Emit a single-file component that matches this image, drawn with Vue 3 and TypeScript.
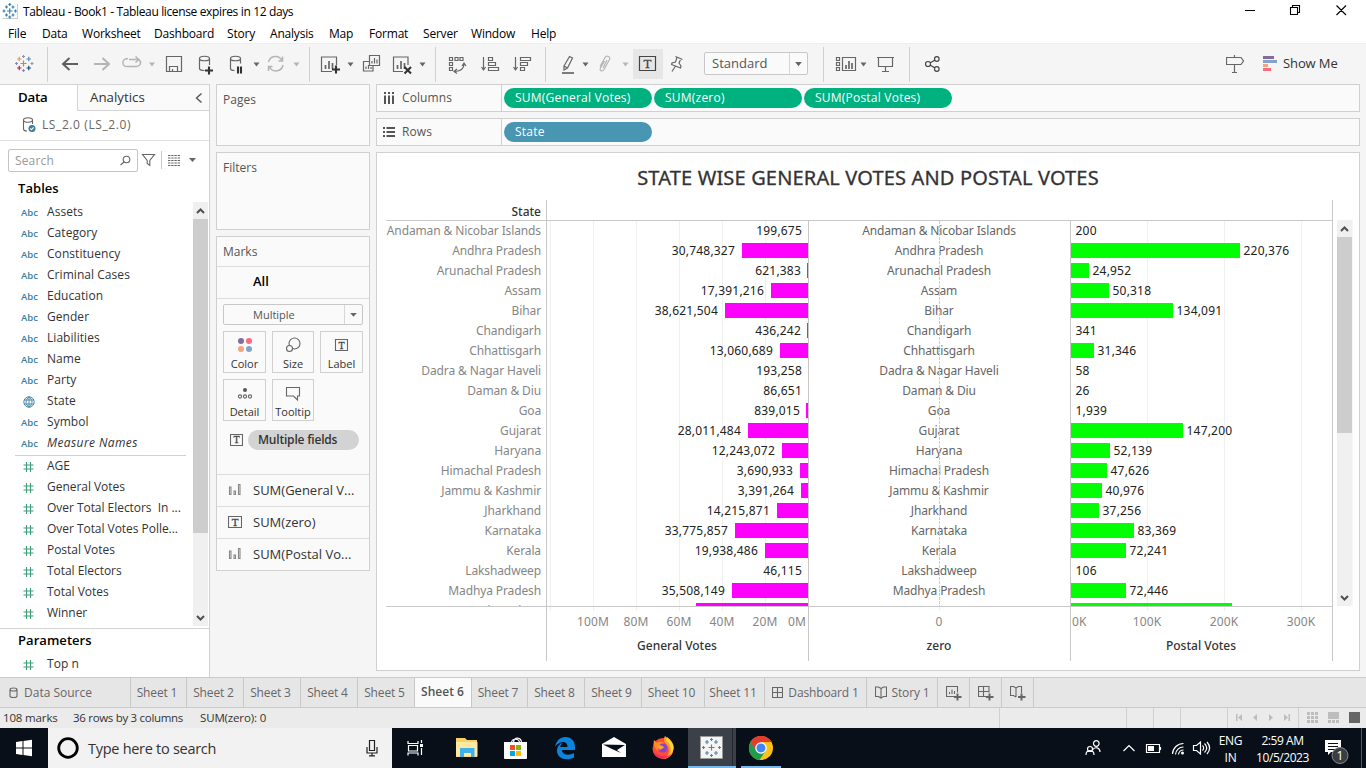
<script setup lang="ts">
interface Shape { d: string; c?: string }
interface Slot { x: number; w: number; shapes: Shape[]; letter?: { x: number; y: number; s: number } }

const caret = (x: number, c = 'cd'): Shape => ({ d: `M${x - 3} 62.500h6l-3 4z`, c })
const bars = (x: number, y: number): Shape => ({ d: `M${x} ${y}v-4M${x + 3.5} ${y}v-8M${x + 7} ${y}v-6`, c: 'thick' })

const toolsLeft: Slot[] = [
  { x: 0, w: 47, shapes: [
    { d: 'M20.5 63.5h6M23.5 60.5v6', c: 'o' },
    { d: 'M17 59h4.500M19.250 56.750v4.500', c: 'o2' },
    { d: 'M26.500 68h4.500M28.750 65.750v4.500', c: 'navy' },
    { d: 'M17 68h4.500M19.250 65.750v4.500', c: 'r' },
    { d: 'M26.500 59h4.500M28.750 56.750v4.500', c: 'bl' },
    { d: 'M22 56.500h3M23.500 55v3M30.500 63.500h3M32 62v3', c: 'bl2' },
    { d: 'M15 63.500h3M16.500 62v3M22 70.500h3M23.500 69v3', c: 'tl' },
  ] },
  { x: 47, w: 41, shapes: [{ d: 'M47.5 47v35', c: 'sep' }, { d: 'M63.5 64H78M69.500 58l-6.500 6 6.500 6', c: 'bold' }] },
  { x: 88, w: 28, shapes: [{ d: 'M94 64h14.500M102.500 58l6.500 6-6.500 6', c: 'boldlt' }] },
  { x: 116, w: 46, shapes: [{ d: 'M128 58.800h-1.200a3.900 3.900 0 0 0 0 7.800h10a3.900 3.900 0 0 0 2.500-6.700M129 59.500h9.500M135.500 56.500l3.300 3-3.300 3', c: 'lt2' }, caret(152, 'cl')] },
  { x: 162, w: 28, shapes: [{ d: 'M166.500 56.500h15v15h-15zM169.500 71v-4.500h8v4.500M172.500 71v-2' }] },
  { x: 190, w: 32, shapes: [{ d: 'M199.500 58.500v10c0 1.500 2 2 5 2M209.500 58.500v6.500M199.500 58.500c0-3 10-3 10 0s-10 3-10 0' }, { d: 'M205 70.500h8M209 66.500v8', c: 'blk' }] },
  { x: 222, w: 41, shapes: [{ d: 'M230.500 58.500v10c0 1.500 1.500 2 4 2M240.500 58.500v5M230.500 58.500c0-3 10-3 10 0s-10 3-10 0' }, { d: 'M238 66.500v7M241 66.500v7', c: 'blk' }, caret(256.5)] },
  { x: 263, w: 46, shapes: [{ d: 'M268.500 62a7.200 7.200 0 0 1 13.500-1.500M283 65a7.200 7.200 0 0 1-13.500 2M282.500 56.500v4.500h-4M268.500 71v-4.500h4', c: 'lt2' }, caret(296.5, 'cl')] },
  { x: 309, w: 51, shapes: [{ d: 'M309.5 47v35', c: 'sep' }, { d: 'M332 71.500h-10.500v-14.500h15v8' }, bars(325.5, 69), { d: 'M332 69.500h8M336 65.500v8', c: 'blk' }, caret(350.500)] },
  { x: 360, w: 30, shapes: [{ d: 'M369.500 55.500h10v10h-10zM369 61.500h-5.500v9.500h9.500V66' }, { d: 'M372 63.500v-2.500M374.500 63.500v-5.500M377 63.500v-4M366 69v-2.500M368.500 69v-4M371 69v-2' }] },
  { x: 390, w: 45, shapes: [{ d: 'M403 71.500h-9.500v-14.500h14.500v8' }, bars(397.5, 69), { d: 'M404.500 67l6.500 6.500M411 67l-6.500 6.500', c: 'blk' }, caret(422.500)] },
  { x: 435, w: 38, shapes: [{ d: 'M435.5 47v35', c: 'sep' }, { d: 'M449.500 57.500h3v3h-3zM455 57.500h3v3h-3zM460 57.500h3v3h-3zM449.500 62.500h3v3h-3zM449.500 67.500h3v3h-3zM464 64c0 4-3 7-9 7.500M462 66l2-3 2 3M457 69l-3 2.500 3 2' }] },
  { x: 473, w: 32, shapes: [{ d: 'M483.500 57v12M481.500 67l2 3 2-3M488.500 57.500h4v3h-4zM488.500 62.500h7v3h-7zM488.500 67.500h10v3h-10z' }] },
  { x: 505, w: 40, shapes: [{ d: 'M515.500 57v12M513.500 67l2 3 2-3M520.500 57.500h10v3h-10zM520.500 62.500h7v3h-7zM520.500 67.500h4v3h-4z' }] },
  { x: 545, w: 48, shapes: [{ d: 'M545.5 47v35', c: 'sep' }, { d: 'M564 66l5.500-9.500 3 1.500-5 10-3.500 2zM564 66l3.500 2' }, { d: 'M562 73h12', c: 'thick' }, caret(585.5)] },
  { x: 593, w: 40, shapes: [{ d: 'M604.500 61l-4 7c-1.500 3 2 4 3.500 1.500l5.500-10c1.500-3-3-4.500-4.500-2l-5 9M607 60l-4 8', c: 'lt' }, caret(625.500, 'cl')] },
  { x: 633, w: 30, shapes: [{ d: 'M633 49h30v30h-30z', c: 'hot' }, { d: 'M639.500 56.500h16v14h-16z', c: 'dk' }], letter: { x: 647.5, y: 68, s: 13 } },
  { x: 663, w: 41, shapes: [{ d: 'M675.500 56.500l7 3M677 57.500l-1.500 4.500-3.500 1-.5 1.500 9 3.500.5-2-2-3 2-4.500M675.500 66l-3.500 5.500' }] },
]
const toolsRight: Slot[] = [
  { x: 808, w: 64, shapes: [{ d: 'M823.5 47v35', c: 'sep' }, { d: 'M836.500 57.500h3v3h-3zM836.500 62.500h3v3h-3zM836.500 67.500h3v3h-3zM842.500 57.500h13v13h-13z' }, { d: 'M846 69v-4M849 69v-8M852 69v-6', c: 'thick' }, caret(863.500)] },
  { x: 872, w: 37, shapes: [{ d: 'M877 57.500h17M878.500 57.500v9h14v-9M885.500 66.500v5M882 71.500h7' }] },
  { x: 909, w: 317, shapes: [{ d: 'M909.5 47v35', c: 'sep' }, { d: 'M930 63l5-3M930 65l5 3M925.500 64a2.500 2.500 0 1 0 5 0 2.500 2.500 0 1 0-5 0M934.500 59a2.300 2.300 0 1 0 4.600 0 2.300 2.300 0 1 0-4.600 0M934.500 69a2.300 2.300 0 1 0 4.600 0 2.300 2.300 0 1 0-4.600 0', c: 'dk' }] },
  { x: 1226, w: 37, shapes: [{ d: 'M1226.500 57.500h14.500l2.500 3.500-2.500 3.500h-14.500zM1234.500 55v2M1234.500 65v7.500M1232 72.500h5' }] },
  { x: 1263, w: 20, shapes: [{ d: 'M1263 56h11v3h-11z', c: 'f1' }, { d: 'M1263 60h14v3h-14z', c: 'f2' }, { d: 'M1263 64h5v3h-5z', c: 'f3' }, { d: 'M1263 68h8v3h-8z', c: 'f4' }] },
]

const menus = ['File', 'Data', 'Worksheet', 'Dashboard', 'Story', 'Analysis', 'Map', 'Format', 'Server', 'Window', 'Help']
const menuX = [8, 42, 82, 154, 227, 270, 329, 369, 423, 471, 531, 600]

const dims = ['Assets', 'Category', 'Constituency', 'Criminal Cases', 'Education', 'Gender', 'Liabilities', 'Name', 'Party', 'State', 'Symbol', 'Measure Names']
const measures = ['AGE', 'General Votes', 'Over Total Electors  In ...', 'Over Total Votes Polle...', 'Postal Votes', 'Total Electors', 'Total Votes', 'Winner']
const hash = 'M3.500 0v10M7.500 0v10M.5 3h10M.5 7h10'

const rows: [string, number, number][] = [
  ['Andaman & Nicobar Islands', 199675, 200], ['Andhra Pradesh', 30748327, 220376], ['Arunachal Pradesh', 621383, 24952],
  ['Assam', 17391216, 50318], ['Bihar', 38621504, 134091], ['Chandigarh', 436242, 341], ['Chhattisgarh', 13060689, 31346],
  ['Dadra & Nagar Haveli', 193258, 58], ['Daman & Diu', 86651, 26], ['Goa', 839015, 1939], ['Gujarat', 28011484, 147200],
  ['Haryana', 12243072, 52139], ['Himachal Pradesh', 3690933, 47626], ['Jammu & Kashmir', 3391264, 40976],
  ['Jharkhand', 14215871, 37256], ['Karnataka', 33775857, 83369], ['Kerala', 19938486, 72241], ['Lakshadweep', 46115, 106],
  ['Madhya Pradesh', 35508149, 72446], ['Maharashtra', 52100000, 210000],
]
const gw = (v: number) => (v < 300000 ? 0 : Math.max(1, Math.round(v * 2.15e-6)))
const pw = (v: number) => (v < 1000 ? 0 : Math.round(v * 0.00077))
const fmt = (v: number) => v.toLocaleString('en-US')
const genTicks: [number, string][] = [[593, '100M'], [636, '80M'], [679, '60M'], [722, '40M'], [765, '20M']]
const postTicks: [number, string][] = [[1147, '100K'], [1224, '200K'], [1301, '300K']]

const sheets = [
  { n: 'Sheet 1', w: 56 }, { n: 'Sheet 2', w: 57 }, { n: 'Sheet 3', w: 57 }, { n: 'Sheet 4', w: 57 }, { n: 'Sheet 5', w: 57 },
  { n: 'Sheet 6', w: 57 }, { n: 'Sheet 7', w: 56 }, { n: 'Sheet 8', w: 57 }, { n: 'Sheet 9', w: 57 }, { n: 'Sheet 10', w: 63 }, { n: 'Sheet 11', w: 60 },
]
</script>

<template>
  <div class="win">
    <header class="title">
      <svg width="23" height="22" viewBox="0 0 23 22" class="ln"><path class="edge" d="M2.500 18.500h15V4" /><path class="bl" d="M7 11h5.500M9.750 8.250v5.500M5 7h3M6.500 5.500v3M11.500 7h3M13 5.500v3M5 15h3M6.500 13.500v3M11.500 15h3M13 13.500v3M8.250 4.500h3M9.750 3v3M8.250 17h3M9.750 15.500v3M2.500 11h3M4 9.500v3M14 11h3M15.500 9.500v3" /></svg>
      <span class="cap">Tableau - Book1 - Tableau license expires in 12 days</span>
      <svg class="ctl" width="130" height="22" viewBox="1236 0 130 22"><path d="M1245 10.500h10M1290.500 7.500h7v7h-7zM1292.500 7v-1.500h7v7H1298M1336.500 5.500l9.500 9.500M1346 5.500l-9.500 9.500" /></svg>
    </header>
    <nav class="menu"><span v-for="(m, i) in menus" :key="m" :style="{ width: menuX[i + 1] - menuX[i] + 'px' }">{{ m }}</span></nav>
    <div class="tools">
      <svg v-for="s in toolsLeft" :key="s.x" class="ic" :width="s.w" height="41" :viewBox="`${s.x} 43 ${s.w} 41`">
        <path v-for="(p, i) in s.shapes" :key="i" :d="p.d" :class="p.c" />
        <text v-if="s.letter" class="serif" :x="s.letter.x" :y="s.letter.y" :font-size="s.letter.s">T</text>
      </svg>
      <div class="sel std"><span>Standard</span><svg width="18" height="21" viewBox="0 0 18 21"><path d="M5.500 9h7l-3.500 4.500z" /></svg></div>
      <svg v-for="s in toolsRight" :key="s.x" class="ic" :width="s.w" height="41" :viewBox="`${s.x} 43 ${s.w} 41`">
        <path v-for="(p, i) in s.shapes" :key="i" :d="p.d" :class="p.c" />
      </svg>
      <span class="showme">Show Me</span>
    </div>

    <main class="work">
      <aside class="data">
        <div class="dtabs"><b>Data</b><div><span>Analytics</span><svg width="8" height="12" viewBox="0 0 8 12"><path d="M6.500 1.500L1.500 6l5 4.500" /></svg></div></div>
        <div class="src"><svg class="ln" width="15" height="16" viewBox="0 0 15 16"><path class="g" d="M1.500 3v9c0 1.500 1.500 2 3.500 2M10.500 3v4M1.500 3c0-3 9-3 9 0s-9 3-9 0" /><circle cx="10" cy="11.500" r="3.500" class="dot" /><path class="w" d="M8.300 11.500l1.200 1.200 2.200-2.400" /></svg>LS_2.0 (LS_2.0)</div>
        <div class="find">
          <div class="box"><span>Search</span><svg class="ln" width="11" height="11" viewBox="0 0 11 11"><circle cx="6.500" cy="4.500" r="3.300" class="g" /><path class="g" d="M4 7L.5 10" /></svg></div>
          <svg class="ln" width="68" height="22" viewBox="138 149 68 22"><path class="g" d="M142.500 154.500h12l-4.700 6v5l-2.600-2v-3z" /><path class="edge" d="M161.500 151v18" /><path class="g dash" d="M168 155.500h12M168 158h12M168 160.500h12M168 163h12M168 165.500h12" /><path class="cf" d="M189 158h7l-3.500 4z" /></svg>
        </div>
        <h3>Tables</h3>
        <div class="listwrap">
          <div class="list">
            <div v-for="d in dims" :key="d" class="it" :class="{ em: d === 'Measure Names' }">
              <i v-if="d !== 'State'">Abc</i>
              <i v-else><svg class="ln" width="12" height="12" viewBox="0 0 12 12"><path class="globe" d="M.8 6a5.200 5.200 0 1 0 10.400 0A5.200 5.200 0 1 0 .8 6M6 .8v10.400M1 4h10M1 8h10M6 .8c-4 3-4 7.500 0 10.400M6 .8c4 3 4 7.500 0 10.400" /></svg></i>
              <span>{{ d }}</span>
            </div>
            <hr />
            <div v-for="d in measures" :key="d" class="it"><i><svg class="ln" width="11" height="10" viewBox="0 0 11 10"><path class="hash" :d="hash" /></svg></i><span>{{ d }}</span></div>
          </div>
          <div class="sb"><svg width="15" height="17" viewBox="0 0 15 17"><path d="M4 11l3.500-3.500L11 11" /></svg><div class="th1"></div><svg width="15" height="17" viewBox="0 0 15 17"><path d="M4 7l3.500 3.500L11 7" /></svg></div>
        </div>
        <div class="params"><h3>Parameters</h3>
          <div class="it"><i><svg class="ln" width="11" height="10" viewBox="0 0 11 10"><path class="hash" :d="hash" /></svg></i><span>Top n</span></div>
        </div>
      </aside>

      <section class="cards">
        <div class="card pages">Pages</div>
        <div class="card filters">Filters</div>
        <div class="card marks">
          <div class="mh">Marks</div>
          <div class="all">All</div>
          <div class="sel mult"><span>Multiple</span><svg width="18" height="19" viewBox="0 0 18 19"><path d="M5.500 8h7l-3.500 4z" /></svg></div>
          <div class="btns">
            <div><svg width="20" height="16" viewBox="0 0 20 16"><circle cx="6" cy="4" r="3" fill="#856b98" /><circle cx="14" cy="4" r="3" fill="#fb6b7c" /><circle cx="6" cy="12" r="3" fill="#f5a47b" /><circle cx="14" cy="12" r="3" fill="#83a3cd" /></svg>Color</div>
            <div><svg class="ln" width="20" height="16" viewBox="0 0 20 16"><circle class="g" cx="11.500" cy="6.500" r="5.500" /><circle class="g card-bg" cx="6.500" cy="11.500" r="3" /></svg>Size</div>
            <div><svg class="ln" width="20" height="16" viewBox="0 0 20 16"><path class="g" d="M3.500 2.500h12v11h-12z" /><text class="serif" x="9.500" y="11.500" font-size="10">T</text></svg>Label</div>
            <div><svg class="ln" width="20" height="16" viewBox="0 0 20 16"><circle cx="10" cy="5" r="2" class="fd" /><circle class="g" cx="5" cy="11.500" r="1.600" /><circle class="g" cx="10" cy="11.500" r="1.600" /><circle class="g" cx="15" cy="11.500" r="1.600" /></svg>Detail</div>
            <div><svg class="ln" width="20" height="16" viewBox="0 0 20 16"><path class="g" d="M3.500 2.500h13v8.500h-2v4l-4-4h-7z" /></svg>Tooltip</div>
          </div>
          <div class="mf"><svg class="ln" width="13" height="12" viewBox="0 0 13 12"><path class="g" d="M.5.500h12v11h-12z" /><text class="serif" x="6.500" y="9.300" font-size="10">T</text></svg><span>Multiple fields</span></div>
          <div class="mrow"><svg class="ln" width="14" height="14" viewBox="0 0 14 14"><path class="mb" d="M1.500 4v7.500h1.500V4zM6 8v3.500h1.500V8zM10.500 1.500v10h1.500v-10z" /></svg>SUM(General V...</div>
          <div class="mrow"><svg class="ln" width="14" height="14" viewBox="0 0 14 14"><path class="g" d="M.5 1.500h13v11h-13z" /><text class="serif" x="7" y="10.500" font-size="11">T</text></svg>SUM(zero)</div>
          <div class="mrow"><svg class="ln" width="14" height="14" viewBox="0 0 14 14"><path class="mb" d="M1.500 4v7.500h1.500V4zM6 8v3.500h1.500V8zM10.500 1.500v10h1.500v-10z" /></svg>SUM(Postal Vo...</div>
        </div>
      </section>

      <section class="view">
        <div class="shelf"><div class="sl"><svg width="12" height="12" viewBox="0 0 12 12"><path d="M1 0h2v2H1zM1 3.500h2V12H1zM5 0h2v2H5zM5 3.500h2V12H5zM9 0h2v2H9zM9 3.500h2V12H9z" /></svg>Columns</div><span class="pill">SUM(General Votes)</span><span class="pill">SUM(zero)</span><span class="pill">SUM(Postal Votes)</span></div>
        <div class="shelf"><div class="sl"><svg width="12" height="12" viewBox="0 0 12 12"><path d="M0 1h2v2H0zM3.500 1H12v2H3.500zM0 5h2v2H0zM3.500 5H12v2H3.500zM0 9h2v2H0zM3.500 9H12v2H3.500z" /></svg>Rows</div><span class="pill blue">State</span></div>
        <div class="sheet">
          <svg class="chart" width="982" height="517" viewBox="377 153 982 517">
            <defs><clipPath id="body"><rect x="377" y="220" width="960" height="386" /></clipPath></defs>
            <text class="h" x="868" y="185" text-anchor="middle">STATE WISE GENERAL VOTES AND POSTAL VOTES</text>
            <path class="grid" d="M550.500 221v390M593.500 221v390M636.500 221v390M679.500 221v390M722.500 221v390M765.500 221v390M1147.500 221v390M1224.500 221v390M1301.500 221v390M939.500 607v4" />
            <g clip-path="url(#body)">
              <g v-for="(r, i) in rows" :key="r[0]">
                <text class="st" x="541" :y="235 + i * 20" text-anchor="end">{{ r[0] }}</text>
                <rect :x="808 - gw(r[1])" :y="223 + i * 20" :width="gw(r[1])" height="15" fill="#ff00ff" />
                <text v-if="i < 19" class="val" :x="gw(r[1]) ? 807 - gw(r[1]) - (gw(r[1]) > 5 ? 6 : 5) : 802" :y="235 + i * 20" text-anchor="end">{{ fmt(r[1]) }}</text>
                <text v-if="i < 19" class="mid" x="939" :y="235 + i * 20" text-anchor="middle">{{ r[0] }}</text>
                <rect x="1070" :y="223 + i * 20" :width="r[2] > 2000 ? pw(r[2]) : 0" height="15" fill="#00ff00" />
                <text v-if="i < 19" class="val" :x="Math.max(1075.5, 1073.500 + pw(r[2]))" :y="235 + i * 20">{{ fmt(r[2]) }}</text>
              </g>
            </g>
            <path class="zero" d="M939.500 221v385" />
            <path class="rule" d="M386 220.500h947M386 606.500h947M546.500 200v461M808.500 221v440M1070.500 221v440M1332.500 200v461" />
            <text class="hd" x="541" y="216" text-anchor="end">State</text>
            <text v-for="t in genTicks" :key="t[0]" class="tick" :x="t[0]" y="626" text-anchor="middle">{{ t[1] }}</text>
            <text class="tick" x="806" y="626" text-anchor="end">0M</text>
            <text class="tick" x="939" y="626" text-anchor="middle">0</text>
            <text class="tick" x="1072" y="626">0K</text>
            <text v-for="t in postTicks" :key="t[0]" class="tick" :x="t[0]" y="626" text-anchor="middle">{{ t[1] }}</text>
            <text class="hd" x="677" y="650" text-anchor="middle">General Votes</text>
            <text class="hd" x="939" y="650" text-anchor="middle">zero</text>
            <text class="hd" x="1201" y="650" text-anchor="middle">Postal Votes</text>
            <path d="M1337 220h15.500v386h-15.500z" fill="#f0f0f0" /><path d="M1337 237h15v196h-15z" fill="#cdcdcd" />
            <path class="arr" d="M1341 231l3.500-3.500 3.500 3.500M1341 596l3.500 3.500 3.500-3.500" />
          </svg>
        </div>
      </section>
    </main>

    <div class="tabs">
      <div class="ds"><svg class="ln" width="9" height="12" viewBox="0 0 9 12"><path class="g" d="M1 3v6c0 2 7 2 7 0V3M1 2.500c0-2 7-2 7 0s-7 2-7 0" /></svg>Data Source</div>
      <div v-for="s in sheets" :key="s.n" class="tab sh" :class="{ on: s.n === 'Sheet 6' }" :style="{ width: s.w + 'px' }">{{ s.n }}</div>
      <div class="tab dashb"><svg class="ln" width="11" height="11" viewBox="0 0 11 11"><path class="g" d="M.5.500h10v10H.5zM5.500.500v10M.5 5.500h10" /></svg>Dashboard 1</div>
      <div class="tab story"><svg class="ln" width="12" height="13" viewBox="0 0 12 13"><path class="g" d="M6 2.500L3.500 1H.5v9.500h3L6 12l2.500-1.500h3V1h-3zM6 2.500V12" /></svg>Story 1</div>
      <div class="tab nw"><svg class="ln" width="16" height="16" viewBox="0 0 16 16"><path class="g" d="M8 11.500H.5v-10h11v6M3.500 9V7M6 9V4.500M8.500 9V6" /><path class="pl" d="M8 12h7.500M11.500 8.500v7" /></svg></div>
      <div class="tab nw"><svg class="ln" width="16" height="16" viewBox="0 0 16 16"><path class="g" d="M8 11.500H.5v-10h10.500v6M5.500 1.500v10M.5 6.500h10.500" /><path class="pl" d="M8 12h7.500M11.500 8.500v7" /></svg></div>
      <div class="tab nw"><svg class="ln" width="16" height="16" viewBox="0 0 16 16"><path class="g" d="M6 3L3.500 1.500h-3v9h3L6 12M6 3l2.500-1.500h3V8M6 3v9" /><path class="pl" d="M8 12h7.500M11.500 8.500v7" /></svg></div>
    </div>

    <div class="status"><span class="s1">108 marks</span><span class="s2">36 rows by 3 columns</span><span>SUM(zero): 0</span>
      <svg width="367" height="20" viewBox="999 708 367 20">
        <path class="v" d="M999.500 708v20M1126.500 708v20M1153.500 708v20M1180.500 708v20M1227.500 708v20M1298.500 708v20" />
        <path class="a" d="M1236 714h1.500v7h-1.500zM1242 714v7l-4-3.500zM1257 714v7l-4-3.500zM1269 714v7l4-3.500zM1284 714v7l4-3.500zM1288.500 714h1.500v7h-1.500z" />
        <path class="a" d="M1307 712h3v3h-3zM1311 712h3v3h-3zM1315 712h3v3h-3zM1307 716h3v3h-3zM1311 716h3v3h-3zM1315 716h3v3h-3zM1307 720h3v3h-3zM1311 720h3v3h-3zM1315 720h3v3h-3zM1328 712h11v7h-11zM1328 720h3v3h-3zM1332 720h3v3h-3zM1336 720h3v3h-3z" />
        <path class="k" d="M1349 712h11v11h-11z" />
      </svg>
    </div>

    <footer class="bar">
      <svg width="48" height="40" viewBox="0 728 48 40"><path fill="#fff" d="M16 742l6.500-1v6.500H16zM23.500 740.900l8.500-1.200v7.800h-8.500zM16 748.500h6.500v6.500l-6.500-1zM23.500 748.500H32v7.700l-8.500-1.200z" /></svg>
      <div class="search"><svg width="40" height="40" viewBox="0 0 40 40"><circle cx="20" cy="20" r="9.300" fill="none" stroke="#000" stroke-width="2.800" /></svg><span>Type here to search</span><svg width="14" height="18" viewBox="0 0 14 18"><path fill="none" stroke="#222" stroke-width="1.200" d="M4.500 1.500h5v10h-5zM2 8v6h10V8M7 14v3M4 16.800h6" /></svg></div>
      <svg width="400" height="40" viewBox="392 728 400 40">
        <path class="wl" d="M408 741v2.500h10V741M408 755.500V753h10v2.500M408.500 745.500h9v5.500h-9zM421.500 740v3M421.500 748v7" /><path fill="#fff" d="M420 744h3v3h-3z" />
        <path fill="#f8d164" d="M456 738h9l2 2h10v17h-21z" /><path fill="#ffe9a2" d="M456 742h21.500v14.500H456z" /><path fill="#3fb1e8" d="M460 748h14.500v9h-3.500v-4h-7v4h-4z" />
        <path fill="#fff" d="M504 742h23v16a1 1 0 0 1-1 1h-21a1 1 0 0 1-1-1z" /><path class="wl" d="M511.500 743c0-5 8-5 8 0M513.500 743c0-7 8-6 8 0" />
        <path fill="#f25022" d="M510 745h5v5h-5z" /><path fill="#7fba00" d="M516 745h5v5h-5z" /><path fill="#00a4ef" d="M510 751h5v5h-5z" /><path fill="#ffb900" d="M516 751h5v5h-5z" />
        <path fill="#0a84dd" d="M555 747c1-6 5-10 10.500-10 6 0 9.700 4.500 9.500 10.500v2.500h-13c0 5 7 6 12 3v4.500c-8 4-17 1-17-7 0-4 3-7 6-8-2 1.500-2.500 3-2.800 4.500h7.300c0-8-10-5-12.500 0z" />
        <path fill="#fff" d="M602 744l12-7 12 7v13h-24z" /><path fill="#080f18" d="M603 744.500l22 .5-8 5 4 3-9-4z" />
        <circle cx="663" cy="748.500" r="10.500" fill="#ff4b38" /><path fill="#ff9a22" d="M665 736c7 5 10 11 7 18-2 3-6 5-9 5 5-2 8-8 4-14-3-2-4-6-2-9z" /><path fill="#ffd33a" d="M667 737c9 7 8 13 3 18 2-6 0-12-4-14z" /><path fill="#ff8b22" d="M654 740l3 3c3-2 6-1 7 0l-1 3c-3 0-5 2-5 5-4-3-5-7-4-11z" /><circle cx="663" cy="748" r="4.500" fill="#8c45c9" /><path fill="#ffa22e" d="M657 746c3-2 6 0 7 1-1 2-4 2-4 3z" /><path fill="#ef1f68" d="M653 751c3 9 14 10 19 3-6 4-14 3-19-3z" opacity=".8" />
        <path fill="#3c4149" d="M688 728h48v40h-48z" /><path fill="#24282e" d="M732 728h1v40h-1z" /><path fill="#76b9ed" d="M688 766h48v2h-48zM741 766h40v2h-40z" />
        <path fill="#f4f4f4" stroke="#999" d="M700.500 736.500h22v22h-22z" />
        <path class="tw" d="M708.500 747.500h6M711.500 744.500v6M705 742h4M707 740v4M714 742h4M716 740v4M705 753h4M707 751v4M714 753h4M716 751v4M710 739.500h3M711.500 738v3M710 755.500h3M711.500 754v3M702 747.500h3M703.500 746v3M718 747.500h3M719.500 746v3" />
        <circle cx="761" cy="748" r="12" fill="#fbc116" /><path fill="#e33b2e" d="M750.500 742l5 9 5.500-9h10.500c-4-8-17-8-21 0z" /><path fill="#1f9d4d" d="M750.500 742a12 12 0 0 0 9 18l6-9-9 0z" /><circle cx="761" cy="748" r="5.800" fill="#fff" /><circle cx="761" cy="748" r="4.500" fill="#4285f4" />
      </svg>
      <svg class="tray" width="136" height="40" viewBox="1078 728 136 40">
        <path class="wl" d="M1086 755c0-6 8-6 8 0M1087.500 749a2.500 2.500 0 1 0 5 0 2.500 2.500 0 1 0-5 0M1093.500 743.500a2.800 2.800 0 1 0 5.600 0 2.800 2.800 0 1 0-5.600 0M1093 749.500c2-3 7-2 7 2.500M1123.500 751l5.500-5.500 5.500 5.500M1146.500 744.500h13v8h-13zM1160.500 747v3" /><path fill="#fff" d="M1148 746h6v5h-6z" />
        <path class="wl" d="M1172.500 754a11 11 0 0 1 11-10.500M1175.500 754.500a8 8 0 0 1 8-7.500M1178.500 754.500a5 5 0 0 1 5-4.500M1193.500 745.500h3l4-3.500v12l-4-3.500h-3zM1202.500 745.500c1.500 1.500 1.500 3.500 0 5M1204.500 743.500c3 3 3 6 0 9M1207 742c3.500 4 3.500 8 0 12" /><circle cx="1182.500" cy="753" r="1.500" fill="#fff" />
      </svg>
      <div class="tt lang"><span>ENG</span><span>IN</span></div>
      <div class="tt clock"><span>2:59 AM</span><span>10/5/2023</span></div>
      <svg class="note" width="48" height="40" viewBox="1320 728 48 40"><path fill="#fff" d="M1327 740h16v12h-10l-3 3v-3h-3z" /><path stroke="#080f18" d="M1330 743.500h10M1330 746.500h10M1330 749.500h7" /><circle cx="1342" cy="755.500" r="8" fill="#3a3d42" stroke="#888" /><text x="1342" y="760" text-anchor="middle" fill="#fff">1</text><path stroke="#555" d="M1363.500 728v40" /></svg>
    </footer>
  </div>
</template>

<style>
html, body { margin: 0; overflow: hidden; }
</style>
<style scoped>
* { box-sizing: border-box; }
.win { width: 1366px; height: 768px; display: flex; flex-direction: column; background: #f5f5f5; font: 12px/16px "Open Sans", "Noto Sans", sans-serif; color: #333; white-space: pre; overflow: hidden; }
svg { display: block; flex: none; }
.title { height: 23px; background: #fff; display: flex; color: #000; }
.cap { line-height: 24px; flex: 1; letter-spacing: -.36px; }
.ctl path { fill: none; stroke: #000; stroke-width: 1.1; }
.menu { height: 20px; background: #fff; color: #000; padding-left: 8px; display: flex; line-height: 22px; letter-spacing: -.2px; }
.tools { height: 41px; display: flex; border-top: 1px solid #eee; }
.tools > svg { margin-top: -1px; }
.ic path { fill: none; stroke: #666; stroke-width: 1.2; }
.ic .cd { fill: #666; stroke: none; } .ic .cl { fill: #b5b5b5; stroke: none; }
.ic .sep { stroke: #d0d0d0; stroke-width: 1; }
.ic .bold { stroke: #606060; stroke-width: 2; } .ic .boldlt { stroke: #b5b5b5; stroke-width: 2; }
.ic .lt { stroke: #b5b5b5; } .ic .lt2 { stroke: #b5b5b5; stroke-width: 1.5; }
.ic .blk { stroke: #333; stroke-width: 2.1; } .ic .thick { stroke: #666; stroke-width: 1.7; } .ic .dk { stroke: #444; }
.ic .hot { fill: #e6e6e6; stroke: none; }
.ic .o { stroke: #e8762d; } .ic .o2 { stroke: #eb9a4e; } .ic .navy { stroke: #1f457e; } .ic .r { stroke: #c72037; } .ic .bl { stroke: #5b8db0; } .ic .bl2 { stroke: #8499b6; } .ic .tl { stroke: #7f8fb4; }
.ic .f1 { fill: #856b98; stroke: none; } .ic .f2 { fill: #83a3cd; stroke: none; } .ic .f3 { fill: #f5a47b; stroke: none; } .ic .f4 { fill: #fb6b7c; stroke: none; }
.serif { font-family: "Liberation Serif", serif; font-weight: 400; text-anchor: middle; fill: #444; stroke: #444; stroke-width: .3; }
.sel { display: flex; border: 1px solid #c8c8c8; border-radius: 2px; background: #fafafa; color: #555; }
.sel span { flex: 1; } .sel svg { border-left: 1px solid #d8d8d8; } .sel path { fill: #666; }
.std { width: 104px; height: 23px; margin-top: 8px; font-size: 13px; line-height: 21px; padding-left: 7px; }
.showme { line-height: 39px; font-size: 13px; letter-spacing: -.1px; }
.work { height: 593px; display: flex; }
.data { width: 210px; border-right: 1px solid #d0d0d0; border-top: 1px solid #d4d4d4; background: #fff; display: flex; flex-direction: column; }
.dtabs { height: 26px; display: flex; font-size: 13.300px; line-height: 25px; }
.dtabs b { width: 77px; padding-left: 18px; color: #000; font-weight: 600; letter-spacing: -.2px; }
.dtabs div { flex: 1; border: 1px solid #d4d4d4; border-width: 0 0 1px 1px; background: #fafafa; display: flex; justify-content: space-between; padding: 0 6px 0 12px; align-items: center; }
.dtabs path { fill: none; stroke: #555; stroke-width: 1.4; }
.src { height: 30px; border-bottom: 1px solid #e0e0e0; display: flex; align-items: center; gap: 5px; padding: 0 0 1px 22px; color: #666; letter-spacing: .6px; }
.ln path, .ln circle { fill: none; stroke-width: 1.1; } .ln .g { stroke: #666; } .ln .dot { fill: #3b7fa0; } .ln .w { stroke: #fff; } .ln .edge { stroke: #ccc; } .ln .bl { stroke: #3a7fae; stroke-width: 1.2; }
.ln .dash { stroke-dasharray: 2.4 .8; } .ln .cf { fill: #666; } .ln .globe { stroke: #3b7fa0; stroke-width: .9; } .ln .hash { stroke: #3f9d7a; } .ln .fd { fill: #555; } .ln .card-bg { fill: #fafafa; } .ln .mb { stroke: #888; } .ln .pl { stroke: #666; stroke-width: 2; }
.find { display: flex; margin: 8px 0 0 8px; }
.box { width: 130px; height: 23px; border: 1px solid #c4c4c4; border-radius: 2px; display: flex; justify-content: space-between; align-items: center; padding: 0 6px; color: #999; letter-spacing: .15px; }
.data h3 { margin: 0; font-size: 13px; font-weight: 600; color: #000; padding-left: 18px; line-height: 18px; letter-spacing: .05px; }
.find + h3 { margin-top: 7px; height: 22px; }
.listwrap { height: 425px; display: flex; }
.list { width: 193px; }
.it { height: 21px; display: flex; align-items: center; padding-left: 21px; line-height: 20px; }
.it i { width: 26px; font-style: normal; font-weight: 600; font-size: 9.500px; color: #3b7fa0; padding-top: 2px; } .it i svg { margin-left: 2px; }
.it span { letter-spacing: .05px; }
.em .em, .em span { font-style: italic; letter-spacing: .4px; }
.list hr { margin: 2px 7px -1px 15px; border: 0; border-top: 1px solid #d0d0d0; }
hr ~ .it span { letter-spacing: -.04px; }
.sb { width: 15px; background: #f0f0f0; display: flex; flex-direction: column; margin-top: 1px; height: 424px; }
.sb path, .arr { fill: none; stroke: #505050; stroke-width: 2; }
.th1 { height: 314px; background: #cdcdcd; } .sb svg:last-child { margin-top: auto; }
.params { border-top: 1px solid #d4d4d4; margin-top: 2px; padding-top: 2px; } .params .it { margin-top: 4px; }
.cards { width: 154px; margin-left: 6px; color: #555; }
.card { border: 1px solid #d0d0d0; background: #fafafa; padding: 7px 6px; }
.pages { height: 62px; margin-bottom: 6px; } .filters { height: 78px; margin-bottom: 6px; } .marks { height: 335px; padding: 0; color: #333; }
.mh { height: 30px; line-height: 29px; padding-left: 6px; border-bottom: 1px solid #dcdcdc; color: #555; }
.all { height: 32px; line-height: 29px; padding-left: 36px; font-weight: 600; font-size: 13px; color: #000; border-bottom: 1px solid #dcdcdc; }
.mult { margin: 5px 6px 6px; height: 21px; padding-left: 29px; line-height: 19px; font-size: 11px; }
.btns { display: grid; grid-template-columns: 43px 42px 43px; gap: 6px; margin-left: 6px; grid-auto-rows: 42px; font-size: 11px; }
.btns div { border: 1px solid #d0d0d0; display: flex; flex-direction: column; align-items: center; padding-top: 5px; gap: 3px; line-height: 15px; }
.mf { height: 53px; display: flex; padding: 9px 0 0 13px; gap: 5px; } .mf svg { margin-top: 4px; }
.mf span { width: 111px; height: 20px; border-radius: 10px; background: #d3d3d3; line-height: 19px; padding-left: 10px; font-weight: 600; letter-spacing: -.2px; }
.mrow { height: 32px; border-top: 1px solid #dcdcdc; display: flex; align-items: center; gap: 11px; padding: 0 0 2px 11px; font-size: 13px; }
.view { flex: 1; margin: 0 6px 0 6px; }
.shelf { height: 28px; border: 1px solid #d0d0d0; background: #fafafa; margin-bottom: 6px; display: flex; gap: 2px; align-items: center; }
.sl { width: 125px; height: 100%; border-right: 1px solid #d0d0d0; display: flex; align-items: center; gap: 7px; padding-left: 6px; color: #555; letter-spacing: .1px; } .sl path { fill: #555; }
.pill { width: 148px; height: 20px; border-radius: 10px; background: #00b180; color: #fff; line-height: 19px; padding-left: 11px; letter-spacing: .22px; } .blue { background: #4996b2; }
.sheet { height: 519px; border: 1px solid #d0d0d0; background: #fff; }
.chart text { font-family: "Noto Sans", sans-serif; font-size: 12px; }
.chart .h { font-size: 20px; fill: #333; font-weight: 400; stroke: #333; stroke-width: .3; letter-spacing: .16px; }
.chart .st { fill: #868686; letter-spacing: -.12px; } .chart .val { fill: #222; letter-spacing: .2px; } .chart .mid { fill: #666; letter-spacing: -.14px; } .chart .hd { fill: #333; font-weight: 500; } .chart .tick { fill: #868686; letter-spacing: .1px; }
.grid { stroke: #f0f0f0; } .zero { stroke: #ccc; stroke-dasharray: 3 1; } .rule { stroke: #c8c8c8; fill: none; }
.tabs { height: 31px; border: 1px solid #cacaca; border-width: 1px 0; background: #e6e6e6; display: flex; line-height: 29px; color: #666; }
.tabs > div { border-right: 1px solid #c8c8c8; }
.ds { width: 131px; padding-left: 9px; display: flex; gap: 6px; align-items: center; }
.tab { display: flex; align-items: center; justify-content: center; gap: 5px; letter-spacing: -.15px; }
.sh { padding-right: 3px; }
.tabs .on { background: #fafafa; font-weight: 600; color: #555; align-items: flex-start; line-height: 27px; letter-spacing: 0; padding-right: 1px; }
.dashb { width: 102px; } .story { width: 71px; } .nw { width: 32px; }
.status { height: 20px; background: #ebebeb; display: flex; line-height: 20px; font-size: 11.500px; letter-spacing: -.15px; padding-left: 3px; }
.s1 { width: 70px; } .s2 { width: 127px; letter-spacing: -.3px; } .status svg { margin-left: auto; } .v { stroke: #d0d0d0; } .a { fill: #bdbdbd; } .k { fill: #666; }
.bar { height: 40px; background: #080f18; display: flex; color: #fff; }
.search { width: 344px; background: #f2f2f2; color: #333; display: flex; align-items: center; font-size: 14.500px; letter-spacing: -.28px; } .search span { flex: 1; padding-top: 1px; } .search svg:last-child { margin-right: 13px; }
.wl { fill: none; stroke: #fff; stroke-width: 1.2; } .tw { stroke: #5582ab; stroke-width: 1.1; fill: none; }
.tray { margin-left: auto; }
.tt { display: flex; flex-direction: column; align-items: center; line-height: 17px; padding-top: 4px; letter-spacing: -.3px; } .lang { width: 33px; } .clock { width: 71px; letter-spacing: -.45px; }
.note text { font-size: 13px; }
</style>
